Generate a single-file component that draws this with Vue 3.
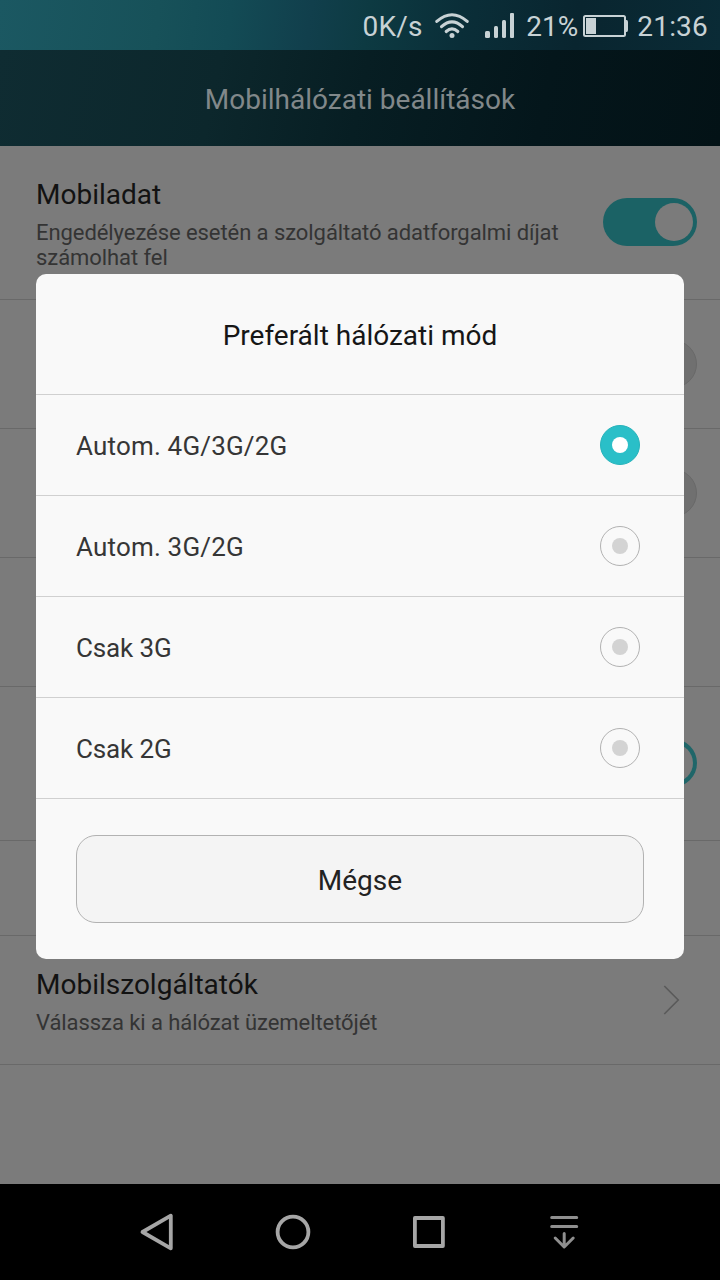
<script setup>
import { ref } from 'vue'

const rows = [
  { size: 'tall', title: 'Mobiladat', text: 'Engedélyezése esetén a szolgáltató adatforgalmi díjat számolhat fel', control: 'on' },
  { size: 'normal', control: 'off' },
  { size: 'normal', control: 'off' },
  { size: 'normal' },
  { size: 'tall', control: 'ring' },
  { size: 'short' },
  { size: 'normal', title: 'Mobilszolgáltatók', text: 'Válassza ki a hálózat üzemeltetőjét', control: 'arrow' },
]

const options = [
  { label: 'Autom. 4G/3G/2G', spacing: 'loose' },
  { label: 'Autom. 3G/2G', spacing: 'loose' },
  { label: 'Csak 3G', spacing: 'tight' },
  { label: 'Csak 2G', spacing: 'tight' },
]
const selected = ref(0)
</script>

<template>
  <div class="screen">
    <div class="status">
      <span class="speed">0K/s</span>
      <svg class="wifi" width="34" height="26" viewBox="0 0 34 26" fill="none" stroke="#c8d2d5" stroke-width="3.1" stroke-linecap="round">
        <path d="M1.8 8.4Q17-4.9 32.2 8.4" />
        <path d="M6.5 13.7Q17 4 27.5 13.7" />
        <path d="M11.2 18.5Q17 13.2 22.8 18.5" />
        <circle cx="17" cy="22.6" r="2.5" fill="#c8d2d5" stroke="none" />
      </svg>
      <svg class="signal" width="30" height="26" viewBox="0 0 30 26" fill="#c8d2d5">
        <rect x="0" y="18" width="5" height="7" rx="1.5" />
        <rect x="9" y="13" width="4" height="12" rx="1.5" />
        <rect x="17" y="7" width="4" height="18" rx="1.5" />
        <rect x="25" y="0" width="4" height="25" rx="1" />
      </svg>
      <span class="percent">21%</span>
      <svg class="battery" width="46" height="24" viewBox="0 0 46 24">
        <rect x="1" y="2" width="41" height="20" rx="1.5" fill="none" stroke="#c8d2d5" stroke-width="2" />
        <rect x="3" y="4" width="10" height="16" fill="#c8d2d5" />
        <path d="M43 6h.6q1.4 0 1.4 2v8q0 2-1.4 2H43z" fill="#c8d2d5" />
      </svg>
      <span class="clock">21:36</span>
    </div>

    <header class="header"><span>Mobilhálózati beállítások</span></header>

    <main class="list">
      <section v-for="(row, i) in rows" :key="i" class="row" :class="row.size">
        <div class="copy">
          <div v-if="row.title" class="row-title"><span>{{ row.title }}</span></div>
          <div v-if="row.text" class="row-text"><span>{{ row.text }}</span></div>
        </div>
        <svg v-if="row.control === 'arrow'" class="arrow" width="20" height="32" viewBox="0 0 20 32" fill="none" stroke="#5a5a5a" stroke-width="1.6">
          <path d="M4.3 2 18.2 16 4.3 30" />
        </svg>
        <div v-else-if="row.control" class="toggle" :class="row.control"><i></i></div>
      </section>
    </main>

    <nav class="nav">
      <svg width="42" height="42" viewBox="0 0 42 42" fill="none" stroke="#a6a6a6" stroke-width="3.8" stroke-linejoin="round">
        <path d="M34.8 4.7V37.3L6.5 21Z" />
      </svg>
      <svg width="42" height="42" viewBox="0 0 42 42" fill="none" stroke="#a6a6a6" stroke-width="3.8">
        <circle cx="21" cy="21" r="15.4" />
      </svg>
      <svg width="42" height="42" viewBox="0 0 42 42" fill="none" stroke="#a6a6a6" stroke-width="3.8" stroke-linejoin="round">
        <rect x="7.9" y="7" width="28" height="28" />
      </svg>
      <svg width="42" height="42" viewBox="0 0 42 42" fill="none" stroke="#8f8f8f" stroke-width="3" stroke-linecap="round" stroke-linejoin="round">
        <path d="M8.7 6.5h25M8.7 15.5h25M21.2 22.5v13M12.2 27l9 9 9-9" />
      </svg>
    </nav>

    <div class="dialog">
      <h2 class="dialog-title"><span>Preferált hálózati mód</span></h2>
      <div v-for="(option, i) in options" :key="option.label" class="option" :class="option.spacing" @click="selected = i">
        <span>{{ option.label }}</span>
        <div class="radio" :class="{ checked: selected === i }"><i></i></div>
      </div>
      <div class="actions"><button class="cancel"><span>Mégse</span></button></div>
    </div>
  </div>
</template>

<style>
body {
  margin: 0;
  background: #000;
}
</style>

<style scoped>
.screen {
  position: relative;
  display: flex;
  flex-direction: column;
  width: 720px;
  height: 1280px;
  overflow: hidden;
  background: #7b7b7b;
  font-family: Roboto, "Liberation Sans", sans-serif;
}
.status {
  display: flex;
  align-items: center;
  justify-content: flex-end;
  box-sizing: border-box;
  height: 50px;
  padding: 2px 12px 0 0;
  color: #c8d2d5;
  font-size: 28px;
  line-height: 46px;
  background: linear-gradient(97deg, #1b5862 0%, #175159 22%, #134b55 32%, #113f4c 43%, #0d3a42 51%, #0a2e38 64%, #09252f 80%, #0a2b36 100%);
}
.speed,
.percent,
.clock { padding-top: 2px; }
.speed { letter-spacing: 0.25px; }
.clock { letter-spacing: 0.2px; }
.wifi { margin: 0 16px 0 12.5px; }
.signal { margin-right: 11px; }
.battery { margin: 0 8px 0 5px; }
.header {
  display: flex;
  align-items: center;
  justify-content: center;
  box-sizing: border-box;
  height: 96px;
  padding-top: 2px;
  color: #81888a;
  font-size: 28px;
  background: linear-gradient(102deg, #0f2c32 0%, #0c272c 30%, #071e23 50%, #04161b 75%, #031216 100%);
}
.list { flex: 1; }
.row {
  display: flex;
  align-items: center;
  justify-content: space-between;
  box-sizing: border-box;
  height: 129px;
  padding: 0 23px 0 36px;
  border-bottom: 1px solid #696969;
}
.tall { height: 154px; }
.short { height: 95px; }
.copy {
  width: 540px;
  padding-top: 1px;
}
.row-title {
  color: #121212;
  font-size: 28px;
  line-height: 36px;
}
.row-text {
  margin-top: 7px;
  color: #343434;
  font-size: 22px;
  line-height: 25px;
  letter-spacing: -0.07px;
}
.toggle {
  display: flex;
  align-items: center;
  justify-content: flex-end;
  box-sizing: border-box;
  width: 94px;
  height: 48px;
  padding: 4px;
  border-radius: 24px;
}
.tall .toggle { margin-bottom: 2px; }
.toggle i {
  width: 38px;
  height: 38px;
  border-radius: 50%;
  background: #7b7b7b;
}
.on { background: #1b6265; }
.off {
  border: 1px solid #696969;
  background: #707070;
}
.off i { background: none; }
.ring { background: #1f6669; }
.arrow { margin-right: 17px; }
.nav {
  display: flex;
  align-items: center;
  justify-content: space-between;
  box-sizing: border-box;
  height: 96px;
  padding: 0 135px 0 136px;
  background: #000;
}
.dialog {
  position: absolute;
  top: 274px;
  left: 36px;
  width: 648px;
  height: 685px;
  border-radius: 10px;
  background: #f9f9f9;
}
.dialog-title {
  display: flex;
  align-items: center;
  justify-content: center;
  box-sizing: border-box;
  height: 121px;
  margin: 0;
  padding-top: 2px;
  border-bottom: 1px solid #d0d0d0;
  color: #161616;
  font-size: 28px;
  font-weight: 400;
}
.option {
  display: flex;
  align-items: center;
  justify-content: space-between;
  box-sizing: border-box;
  height: 101px;
  padding: 0 44px 0 40px;
  border-bottom: 1px solid #d0d0d0;
  color: #363636;
  font-size: 26px;
}
.option span { padding-top: 2px; }
.loose { letter-spacing: 0.18px; }
.tight { letter-spacing: -0.12px; }
.radio {
  display: flex;
  align-items: center;
  justify-content: center;
  box-sizing: border-box;
  width: 40px;
  height: 40px;
  border: 1px solid #b2b2b2;
  border-radius: 50%;
}
.radio i {
  width: 16px;
  height: 16px;
  border-radius: 50%;
  background: #d3d3d3;
}
.checked {
  border-color: #27b3bb;
  background: #2abfc8;
}
.checked i { background: #fff; }
.actions { padding: 36px 40px; }
.cancel {
  display: block;
  box-sizing: border-box;
  width: 100%;
  height: 88px;
  padding: 3px 0 0;
  border: 1px solid #b2b2b2;
  border-radius: 20px;
  color: #222;
  background: #f4f4f4;
  font: 28px Roboto, "Liberation Sans", sans-serif;
}
</style>
